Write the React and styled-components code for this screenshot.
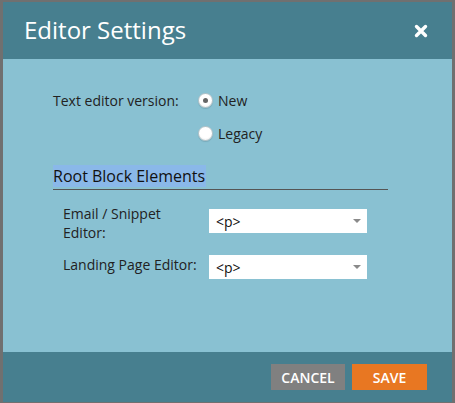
import React from "react";
import styled, { createGlobalStyle } from "styled-components";

const Global = createGlobalStyle`
  html, body { margin: 0; padding: 0; }
  body {
    background: #707070;
    font-family: "Open Sans", "Liberation Sans", sans-serif;
    width: 455px;
    height: 403px;
    overflow: hidden;
  }
`;

const Dialog = styled.div`
  margin: 2px 3px 1px 3px;
  width: 449px;
  height: 400px;
  display: flex;
  flex-direction: column;
  background: #89c1d2;
`;

const Header = styled.div`
  height: 57px;
  background: #477f8f;
  display: flex;
  align-items: center;
  justify-content: space-between;
  padding: 0 24px 0 21px;
  box-sizing: border-box;
`;

const Title = styled.h1`
  margin: 0;
  font-size: 24px;
  font-weight: 400;
  color: #fff;
  line-height: 30px;
  padding-bottom: 2px;
`;

const CloseButton = styled.button`
  border: 0;
  background: transparent;
  padding: 0;
  width: 14px;
  height: 14px;
  display: flex;
  cursor: pointer;
`;

const Body = styled.div`
  flex: 1;
  padding: 32px 0 0 50px;
  box-sizing: border-box;
  color: #222;
  font-size: 14px;
`;

const VersionRow = styled.div`
  display: grid;
  grid-template-columns: 145px auto;
  align-items: start;
`;

const Label = styled.div`
  line-height: 19px;
`;

const RadioList = styled.div`
  display: flex;
  flex-direction: column;
  gap: 14px;
`;

const RadioItem = styled.label`
  display: flex;
  align-items: center;
  gap: 5px;
  line-height: 19px;
  font-size: 14px;
`;

const RadioCircle = styled.span`
  width: 13px;
  height: 13px;
  border-radius: 50%;
  background: radial-gradient(circle at 50% 40%, #ffffff 55%, #e4e4e4 100%);
  border: 1px solid #b8c4c8;
  box-shadow: 0 1px 1px rgba(0, 0, 0, 0.12);
  display: flex;
  align-items: center;
  justify-content: center;
  &::after {
    content: "";
    width: 5px;
    height: 5px;
    border-radius: 50%;
    background: ${(p) => (p.$checked ? "#666" : "transparent")};
  }
`;

const SectionTitle = styled.div`
  margin-top: 22px;
  width: 335px;
  border-bottom: 1px solid #555;
  padding-bottom: 2px;
  font-size: 16px;
`;

const Highlight = styled.span`
  background: #8ab8e9;
  display: inline-block;
  line-height: 22px;
  padding-right: 1px;
  color: #111;
`;

const Fields = styled.div`
  margin-top: 14px;
  padding-left: 10px;
  display: flex;
  flex-direction: column;
  gap: 13px;
`;

const FieldRow = styled.div`
  display: grid;
  grid-template-columns: 146px 158px;
  align-items: start;
`;

const FieldLabel = styled.div`
  line-height: 19px;
  padding-right: 10px;
`;

const Select = styled.div`
  margin-top: ${(p) => p.$offset || 0}px;
  height: 24px;
  background: #fff;
  position: relative;
  display: flex;
  align-items: center;
  padding-left: 7px;
  color: #111;
  font-size: 14px;
  box-sizing: border-box;
  &::after {
    content: "";
    position: absolute;
    right: 6px;
    top: 10px;
    border-left: 4px solid transparent;
    border-right: 4px solid transparent;
    border-top: 4px solid #8a8a8a;
  }
`;

const Footer = styled.div`
  height: 50px;
  background: #477f8f;
  display: flex;
  justify-content: flex-end;
  align-items: center;
  gap: 7px;
  padding-right: 25px;
  box-sizing: border-box;
`;

const Button = styled.button`
  border: 0;
  height: 26px;
  width: ${(p) => p.$w}px;
  background: ${(p) => p.$bg};
  color: #fff;
  font-family: "Open Sans", "Liberation Sans", sans-serif;
  font-size: 14px;
  font-weight: 600;
  text-transform: uppercase;
  padding: 0;
  cursor: pointer;
`;

export default function App() {
  return (
    <>
      <Global />
      <Dialog>
        <Header>
          <Title>Editor Settings</Title>
          <CloseButton aria-label="Close">
            <svg width="14" height="14" viewBox="0 0 14 14">
              <path d="M2.5 2.5 L11.5 11.5 M11.5 2.5 L2.5 11.5" stroke="#fff" strokeWidth="3.4" strokeLinecap="round" />
            </svg>
          </CloseButton>
        </Header>
        <Body>
          <VersionRow>
            <Label>Text editor version:</Label>
            <RadioList>
              <RadioItem>
                <RadioCircle $checked />
                New
              </RadioItem>
              <RadioItem>
                <RadioCircle />
                Legacy
              </RadioItem>
            </RadioList>
          </VersionRow>
          <SectionTitle>
            <Highlight>Root Block Elements</Highlight>
          </SectionTitle>
          <Fields>
            <FieldRow>
              <FieldLabel>Email / Snippet Editor:</FieldLabel>
              <Select $offset={5}>&lt;p&gt;</Select>
            </FieldRow>
            <FieldRow>
              <FieldLabel>Landing Page Editor:</FieldLabel>
              <Select>&lt;p&gt;</Select>
            </FieldRow>
          </Fields>
        </Body>
        <Footer>
          <Button $w={74} $bg="#808080">Cancel</Button>
          <Button $w={75} $bg="#e87722">Save</Button>
        </Footer>
      </Dialog>
    </>
  );
}
